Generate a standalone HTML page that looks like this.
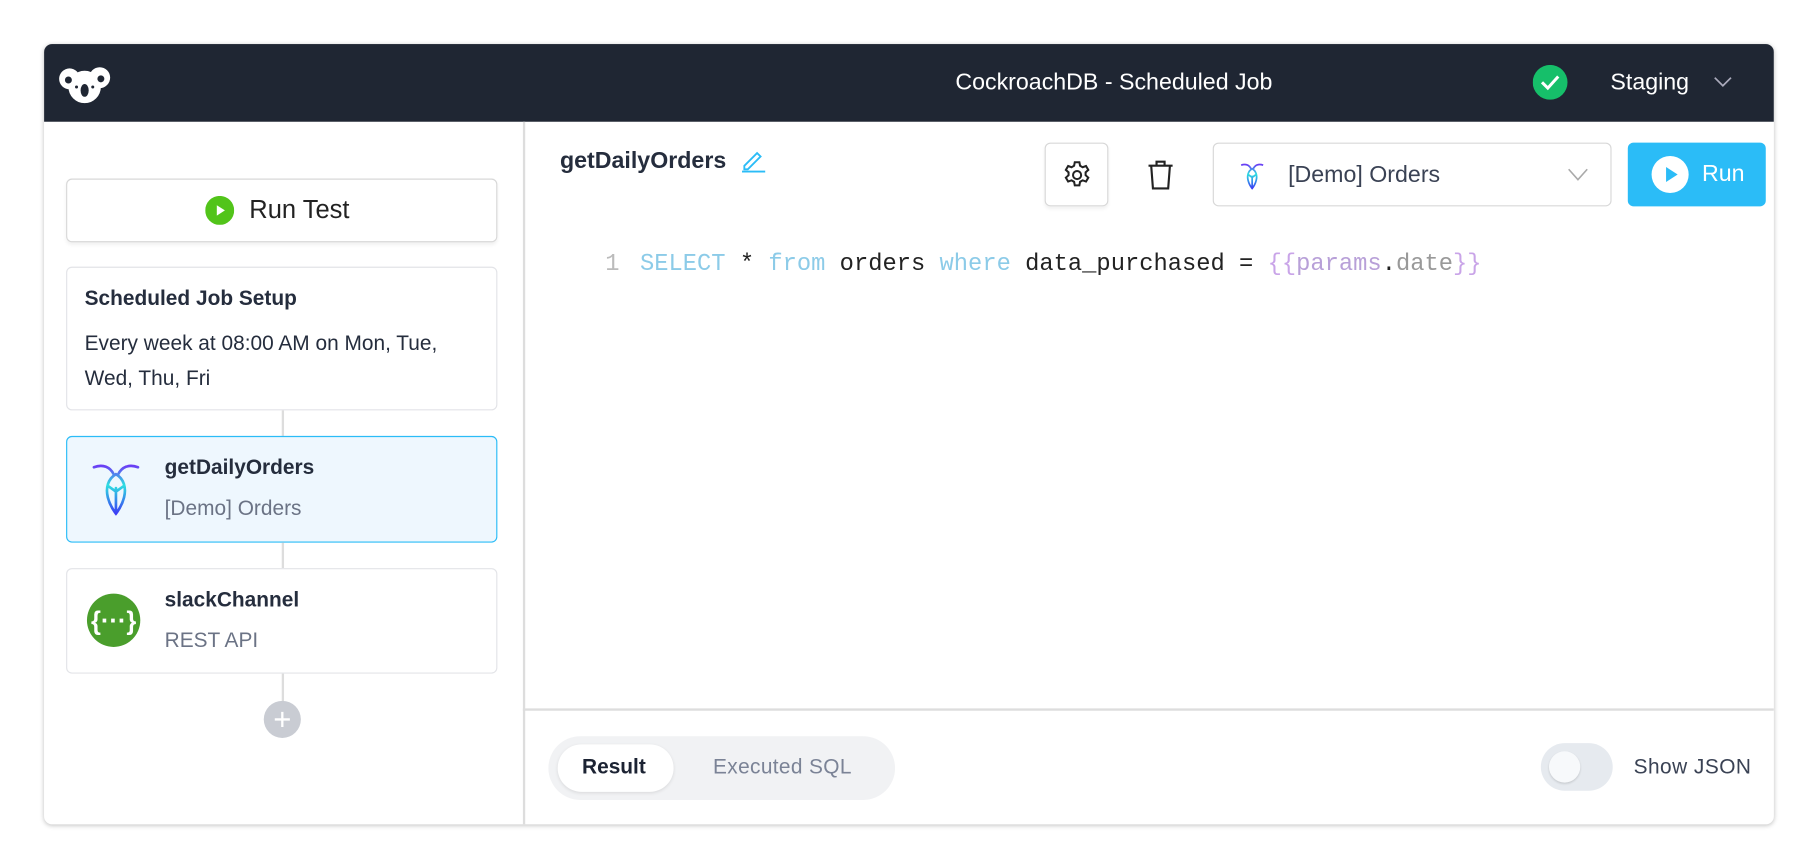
<!DOCTYPE html>
<html><head><meta charset="utf-8"><style>
*{box-sizing:border-box;margin:0;padding:0}
html,body{width:1818px;height:868px;overflow:hidden;background:#fff;font-family:"Liberation Sans",sans-serif}
#w{position:absolute;left:0;top:0;width:1568px;height:749px;transform:scale(1.1594);transform-origin:0 0}
.a{position:absolute}
#panel{left:38px;top:38px;width:1492px;height:673px;border-radius:7px;background:#fff;box-shadow:0 1px 4px rgba(0,0,0,.25);overflow:hidden}
#hdr{left:0;top:0;width:1492px;height:67px;background:#1f2633}
.card{position:absolute;left:19px;width:372px;border:1.5px solid #e3e4e8;border-radius:5px;background:#fff}
.t{color:#252d3d;font-size:18px;font-weight:bold}
.s{color:#6b7385;font-size:18px}
.mono{font-family:"Liberation Mono","DejaVu Sans Mono",monospace;font-size:20.5px}
</style></head><body><div id="w">
<div id="panel" class="a">
 <div id="hdr" class="a">
  <svg class="a" style="left:12px;top:17px" width="46" height="36" viewBox="0 0 46 36">
   <circle cx="10" cy="13" r="9" fill="#fff"/><circle cx="36" cy="12" r="9" fill="#fff"/>
   <ellipse cx="23" cy="20" rx="14" ry="14" fill="#fff"/>
   <circle cx="9" cy="14" r="3" fill="#1f2633"/><circle cx="37" cy="13" r="3" fill="#1f2633"/>
   <ellipse cx="23" cy="23" rx="3.5" ry="5.5" fill="#1f2633"/>
   <circle cx="16" cy="20" r="1.3" fill="#1f2633"/><circle cx="30" cy="20" r="1.3" fill="#1f2633"/>
  </svg>
  <div class="a" style="left:786px;top:22px;color:#fff;font-size:20px">CockroachDB - Scheduled Job</div>
  <svg class="a" style="left:1284px;top:18px" width="30" height="30"><circle cx="15" cy="15" r="15" fill="#16bf6a"/><path d="M8 15l5 5 9-10" stroke="#fff" stroke-width="2.6" fill="none"/></svg>
  <div class="a" style="left:1351px;top:22px;color:#fff;font-size:20px">Staging</div>
  <svg class="a" style="left:1440px;top:28px" width="16" height="10"><path d="M1 1l7 7 7-7" stroke="#aab" stroke-width="1.5" fill="none"/></svg>
 </div>
 <div class="a" style="left:413px;top:67px;width:1.5px;height:606px;background:#ddd"></div>
 <div class="a" style="left:19px;top:116px;width:372px;height:55px;border:1.5px solid #d8d8d8;border-radius:5px;box-shadow:0 2px 3px rgba(0,0,0,.06)">
  <svg class="a" style="left:119px;top:14px" width="25" height="25"><circle cx="12.5" cy="12.5" r="12.5" fill="#52c41a"/><path d="M10 8l7 4.5-7 4.5z" fill="#fff"/></svg>
  <div class="a" style="left:157px;top:13px;font-size:22px;color:#222">Run Test</div>
 </div>
 <div class="card" style="top:192px;height:124px">
  <div class="a t" style="left:15px;top:16px">Scheduled Job Setup</div>
  <div class="a" style="left:15px;top:50px;font-size:18px;color:#252d3d;line-height:30px;width:350px">Every week at 08:00 AM on Mon, Tue, Wed, Thu, Fri</div>
 </div>
 <div class="a" style="left:205px;top:316px;width:1.5px;height:22px;background:#ddd"></div>
 <div class="card" style="top:338px;height:92px;background:#eef7fe;border-color:#2bbcf7">
  <svg class="a" style="left:20px;top:20px" width="44" height="50" viewBox="0 0 44 50">
   <defs><linearGradient id="g" x1="0" y1="0" x2="0" y2="1"><stop offset="0" stop-color="#6b3cf5"/><stop offset=".4" stop-color="#2de0e0"/><stop offset="1" stop-color="#3c3cf5"/></linearGradient></defs>
   <path d="M3 6c8-3 14 0 17 6M41 6c-8-3-14 0-17 6M22 12c-7 4-9 12-7 20 2 8 7 14 7 14s5-6 7-14c2-8 0-16-7-20zM22 24v22M15 22l7 5 7-5" stroke="url(#g)" stroke-width="2.3" fill="none" stroke-linecap="round"/>
  </svg>
  <div class="a t" style="left:84px;top:16px">getDailyOrders</div>
  <div class="a s" style="left:84px;top:51px">[Demo] Orders</div>
 </div>
 <div class="a" style="left:205px;top:430px;width:1.5px;height:22px;background:#ddd"></div>
 <div class="card" style="top:452px;height:91px">
  <svg class="a" style="left:16px;top:20px" width="48" height="48"><circle cx="24" cy="24" r="23" fill="#4a9e2c"/><text x="24" y="32" text-anchor="middle" fill="#fff" font-size="22" font-weight="bold" font-family="Liberation Sans">{···}</text></svg>
  <div class="a t" style="left:84px;top:16px">slackChannel</div>
  <div class="a s" style="left:84px;top:51px">REST API</div>
 </div>
 <div class="a" style="left:205px;top:543px;width:1.5px;height:24px;background:#ddd"></div>
 <svg class="a" style="left:189px;top:566px" width="33" height="33"><circle cx="16.5" cy="16.5" r="16" fill="#c9ccd3"/><path d="M16.5 10v13M10 16.5h13" stroke="#fff" stroke-width="2"/></svg>
 <div class="a" style="left:445px;top:90px;font-size:20px;font-weight:bold;color:#252d3d">getDailyOrders</div>
 <svg class="a" style="left:600px;top:88px" width="24" height="24"><path d="M4 17l11-11 3 3-11 11H4z" stroke="#2bbcf7" stroke-width="1.6" fill="none"/><path d="M2 22h20" stroke="#2bbcf7" stroke-width="1.6"/></svg>
 <div class="a" style="left:863px;top:85px;width:55px;height:55px;border:1.5px solid #d8d8d8;border-radius:5px;box-shadow:0 2px 3px rgba(0,0,0,.06)">
  <svg class="a" style="left:13px;top:13px" width="28" height="28" viewBox="0 0 24 24" fill="none" stroke="#222" stroke-width="1.5"><circle cx="12" cy="12" r="3"/><path d="M10.3 2.5h3.4l.5 2.6 1.9 1.1 2.5-.9 1.7 2.9-2 1.8v2.1l2 1.8-1.7 2.9-2.5-.9-1.9 1.1-.5 2.6h-3.4l-.5-2.6-1.9-1.1-2.5.9-1.7-2.9 2-1.8v-2.1l-2-1.8 1.7-2.9 2.5.9 1.9-1.1z"/></svg>
 </div>
 <svg class="a" style="left:949px;top:98px" width="28" height="30" viewBox="0 0 24 26" fill="none" stroke="#222" stroke-width="1.6"><path d="M3 6h18M9 6V3h6v3M5 6l1.3 17h11.4L19 6"/></svg>
 <div class="a" style="left:1008px;top:85px;width:344px;height:55px;border:1.5px solid #d8d8d8;border-radius:5px">
  <svg class="a" style="left:22px;top:15px" width="22" height="26" viewBox="0 0 44 50"><path d="M3 6c8-3 14 0 17 6M41 6c-8-3-14 0-17 6M22 12c-7 4-9 12-7 20 2 8 7 14 7 14s5-6 7-14c2-8 0-16-7-20zM22 24v22M15 22l7 5 7-5" stroke="url(#g)" stroke-width="3" fill="none"/></svg>
  <div class="a" style="left:64px;top:16px;font-size:20px;color:#3a4254">[Demo] Orders</div>
  <svg class="a" style="left:305px;top:21px" width="18" height="12"><path d="M1 1l8 9 8-9" stroke="#aaa" stroke-width="1.4" fill="none"/></svg>
 </div>
 <div class="a" style="left:1366px;top:85px;width:119px;height:55px;background:#2bbcf7;border-radius:5px">
  <svg class="a" style="left:20px;top:11px" width="33" height="33"><circle cx="16.5" cy="16.5" r="16" fill="#fff"/><path d="M13 10l10 6.5-10 6.5z" fill="#2bbcf7"/></svg>
  <div class="a" style="left:64px;top:16px;font-size:20px;color:#fff">Run</div>
 </div>
 <div class="a mono" style="left:484px;top:179px;color:#bbb">1</div>
 <div class="a mono" style="left:514px;top:179px;color:#222;white-space:pre"><span style="color:#8ccbe8">SELECT</span> * <span style="color:#8ccbe8">from</span> orders <span style="color:#8ccbe8">where</span> data_purchased = <span style="color:#c9a4e8">{{</span><span style="color:#b8a0d8">params</span>.<span style="color:#999">date</span><span style="color:#c9a4e8">}}</span></div>
 <div class="a" style="left:413px;top:573px;width:1079px;height:1.5px;background:#ddd"></div>
 <div class="a" style="left:435px;top:597px;width:299px;height:55px;background:#f1f2f4;border-radius:28px">
  <div class="a" style="left:8px;top:7px;width:100px;height:41px;background:#fff;border-radius:21px;box-shadow:0 1px 3px rgba(0,0,0,.1)"></div>
  <div class="a" style="left:29px;top:16px;font-size:18px;font-weight:bold;color:#1c2333">Result</div>
  <div class="a" style="left:142px;top:16px;font-size:18px;color:#7b8396;letter-spacing:.3px">Executed SQL</div>
 </div>
 <div class="a" style="left:1291px;top:603px;width:62px;height:41px;background:#e6eaef;border-radius:21px">
  <div class="a" style="left:7px;top:7px;width:27px;height:27px;background:#f7f9fb;border-radius:50%;box-shadow:0 1px 2px rgba(0,0,0,.15)"></div>
 </div>
 <div class="a" style="left:1371px;top:613px;font-size:18px;color:#3a4254;letter-spacing:.4px">Show JSON</div>
</div>
</div></body></html>
